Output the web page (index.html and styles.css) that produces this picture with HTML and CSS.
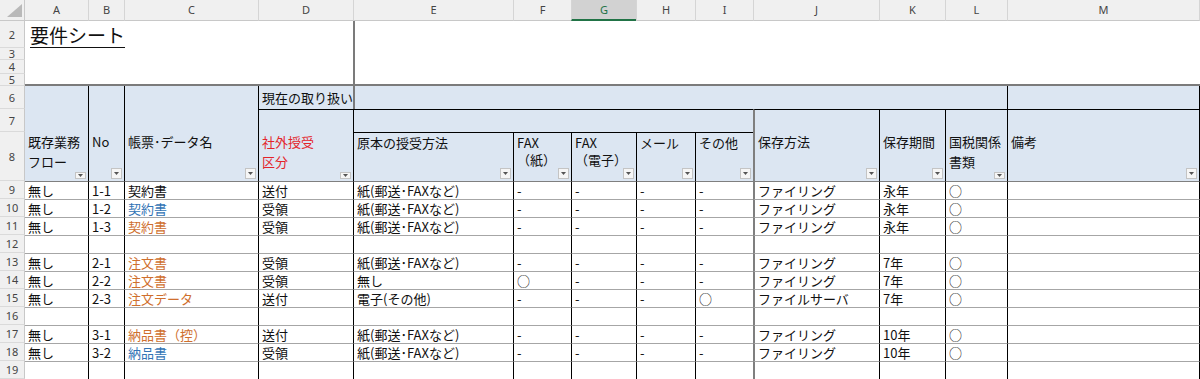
FILE: index.html
```html
<!DOCTYPE html>
<html lang="ja">
<head>
<meta charset="utf-8">
<title>要件シート</title>
<link rel="stylesheet" href="styles.css">
</head>
<body>
<div class="sheet">
  <div class="row">
    <div class="corner"><svg width="15" height="13" viewBox="0 0 15 13"><polygon points="15,0 15,13 0,13" fill="#b9b9b9"/></svg></div>
    <div class="ch first">A</div><div class="ch">B</div><div class="ch">C</div><div class="ch">D</div><div class="ch">E</div><div class="ch">F</div><div class="ch sel">G</div><div class="ch">H</div><div class="ch">I</div><div class="ch">J</div><div class="ch">K</div><div class="ch">L</div><div class="ch m">M</div>
  </div>

  <div class="title"><span>要件シート</span></div>
  <div class="blank"></div>
  <div class="fz-top"></div>
  <div class="rh">2</div>
  <div class="rh">3</div>
  <div class="rh">4</div>
  <div class="rh">5</div>

  <div class="row">
    <div class="rh">6</div>
    <div class="h a"></div>
    <div class="h bl"></div>
    <div class="h bl"></div>
    <div class="h bl mid">現在の取り扱い</div>
    <div class="h fz span8"></div>
    <div class="h bl m"></div>
  </div>

  <div class="row">
    <div class="rh">7</div>
    <div class="h a"></div>
    <div class="h bl"></div>
    <div class="h bl"></div>
    <div class="h bl bt"></div>
    <div class="h bl bt span5"></div>
    <div class="h jl bt"></div>
    <div class="h bl bt"></div>
    <div class="h bl bt"></div>
    <div class="h bl bt m"></div>
  </div>

  <div class="row">
    <div class="rh">8</div>
    <div class="h a"><div class="txt">既存業務<br>フロー</div><div class="flt"><svg width="5" height="3" viewBox="0 0 5 3"><polygon points="0,0 5,0 2.5,3" fill="#555"/></svg></div></div>
    <div class="h bl"><div class="txt">No</div><div class="flt"><svg width="5" height="3" viewBox="0 0 5 3"><polygon points="0,0 5,0 2.5,3" fill="#555"/></svg></div></div>
    <div class="h bl"><div class="txt">帳票･データ名</div><div class="flt"><svg width="5" height="3" viewBox="0 0 5 3"><polygon points="0,0 5,0 2.5,3" fill="#555"/></svg></div></div>
    <div class="h bl"><div class="txt red">社外授受<br>区分</div><div class="flt"><svg width="5" height="3" viewBox="0 0 5 3"><polygon points="0,0 5,0 2.5,3" fill="#555"/></svg></div></div>
    <div class="h bl bt"><div class="txt">原本の授受方法</div><div class="flt"><svg width="5" height="3" viewBox="0 0 5 3"><polygon points="0,0 5,0 2.5,3" fill="#555"/></svg></div></div>
    <div class="h bl bt"><div class="txt fax">FAX<br>（紙）</div><div class="flt"><svg width="5" height="3" viewBox="0 0 5 3"><polygon points="0,0 5,0 2.5,3" fill="#555"/></svg></div></div>
    <div class="h bl bt"><div class="txt fax">FAX<br>（電子）</div><div class="flt"><svg width="5" height="3" viewBox="0 0 5 3"><polygon points="0,0 5,0 2.5,3" fill="#555"/></svg></div></div>
    <div class="h bl bt"><div class="txt">メール</div><div class="flt"><svg width="5" height="3" viewBox="0 0 5 3"><polygon points="0,0 5,0 2.5,3" fill="#555"/></svg></div></div>
    <div class="h bl bt"><div class="txt">その他</div><div class="flt"><svg width="5" height="3" viewBox="0 0 5 3"><polygon points="0,0 5,0 2.5,3" fill="#555"/></svg></div></div>
    <div class="h jl"><div class="txt">保存方法</div><div class="flt"><svg width="5" height="3" viewBox="0 0 5 3"><polygon points="0,0 5,0 2.5,3" fill="#555"/></svg></div></div>
    <div class="h bl"><div class="txt">保存期間</div><div class="flt"><svg width="5" height="3" viewBox="0 0 5 3"><polygon points="0,0 5,0 2.5,3" fill="#555"/></svg></div></div>
    <div class="h bl"><div class="txt">国税関係<br>書類</div><div class="flt"><svg width="5" height="3" viewBox="0 0 5 3"><polygon points="0,0 5,0 2.5,3" fill="#555"/></svg></div></div>
    <div class="h bl m"><div class="txt">備考</div><div class="flt"><svg width="5" height="3" viewBox="0 0 5 3"><polygon points="0,0 5,0 2.5,3" fill="#555"/></svg></div></div>
  </div>

  <div class="row r9">
    <div class="rh">9</div>
    <div class="c a">無し</div><div class="c">1-1</div><div class="c">契約書</div><div class="c">送付</div><div class="c">紙(郵送･FAXなど)</div><div class="c">-</div><div class="c">-</div><div class="c">-</div><div class="c">-</div><div class="c j">ファイリング</div><div class="c">永年</div><div class="c">○</div><div class="c m"></div>
  </div>
  <div class="row">
    <div class="rh">10</div>
    <div class="c a">無し</div><div class="c">1-2</div><div class="c blue">契約書</div><div class="c">受領</div><div class="c">紙(郵送･FAXなど)</div><div class="c">-</div><div class="c">-</div><div class="c">-</div><div class="c">-</div><div class="c j">ファイリング</div><div class="c">永年</div><div class="c">○</div><div class="c m"></div>
  </div>
  <div class="row">
    <div class="rh">11</div>
    <div class="c a">無し</div><div class="c">1-3</div><div class="c orange">契約書</div><div class="c">受領</div><div class="c">紙(郵送･FAXなど)</div><div class="c">-</div><div class="c">-</div><div class="c">-</div><div class="c">-</div><div class="c j">ファイリング</div><div class="c">永年</div><div class="c">○</div><div class="c m"></div>
  </div>
  <div class="row">
    <div class="rh">12</div>
    <div class="c a"></div><div class="c"></div><div class="c"></div><div class="c"></div><div class="c"></div><div class="c"></div><div class="c"></div><div class="c"></div><div class="c"></div><div class="c j"></div><div class="c"></div><div class="c"></div><div class="c m"></div>
  </div>
  <div class="row">
    <div class="rh">13</div>
    <div class="c a">無し</div><div class="c">2-1</div><div class="c orange">注文書</div><div class="c">受領</div><div class="c">紙(郵送･FAXなど)</div><div class="c">-</div><div class="c">-</div><div class="c">-</div><div class="c">-</div><div class="c j">ファイリング</div><div class="c">7年</div><div class="c">○</div><div class="c m"></div>
  </div>
  <div class="row">
    <div class="rh">14</div>
    <div class="c a">無し</div><div class="c">2-2</div><div class="c orange">注文書</div><div class="c">受領</div><div class="c">無し</div><div class="c">○</div><div class="c">-</div><div class="c">-</div><div class="c">-</div><div class="c j">ファイリング</div><div class="c">7年</div><div class="c">○</div><div class="c m"></div>
  </div>
  <div class="row">
    <div class="rh">15</div>
    <div class="c a">無し</div><div class="c">2-3</div><div class="c orange">注文データ</div><div class="c">送付</div><div class="c">電子(その他)</div><div class="c">-</div><div class="c">-</div><div class="c">-</div><div class="c">○</div><div class="c j">ファイルサーバ</div><div class="c">7年</div><div class="c">○</div><div class="c m"></div>
  </div>
  <div class="row">
    <div class="rh">16</div>
    <div class="c a"></div><div class="c"></div><div class="c"></div><div class="c"></div><div class="c"></div><div class="c"></div><div class="c"></div><div class="c"></div><div class="c"></div><div class="c j"></div><div class="c"></div><div class="c"></div><div class="c m"></div>
  </div>
  <div class="row">
    <div class="rh">17</div>
    <div class="c a">無し</div><div class="c">3-1</div><div class="c orange">納品書（控）</div><div class="c">送付</div><div class="c">紙(郵送･FAXなど)</div><div class="c">-</div><div class="c">-</div><div class="c">-</div><div class="c">-</div><div class="c j">ファイリング</div><div class="c">10年</div><div class="c">○</div><div class="c m"></div>
  </div>
  <div class="row">
    <div class="rh">18</div>
    <div class="c a">無し</div><div class="c">3-2</div><div class="c blue">納品書</div><div class="c">受領</div><div class="c">紙(郵送･FAXなど)</div><div class="c">-</div><div class="c">-</div><div class="c">-</div><div class="c">-</div><div class="c j">ファイリング</div><div class="c">10年</div><div class="c">○</div><div class="c m"></div>
  </div>
  <div class="row">
    <div class="rh">19</div>
    <div class="c a"></div><div class="c"></div><div class="c"></div><div class="c"></div><div class="c"></div><div class="c"></div><div class="c"></div><div class="c"></div><div class="c"></div><div class="c j"></div><div class="c"></div><div class="c"></div><div class="c m"></div>
  </div>
</div>
</body>
</html>
```

FILE: styles.css
```css
* { box-sizing: border-box; }
html, body { margin: 0; padding: 0; background: #fff; }
body {
  width: 1200px;
  height: 379px;
  overflow: hidden;
  font-family: "Noto Sans CJK JP", sans-serif;
  color: #111;
}
.sheet {
  display: grid;
  grid-template-columns: 25px 63px 36px 134px 95px 160px 58px 65px 59px 58px 126px 66px 62px 193px;
  grid-template-rows: 21px 27px 12px 14px 12px 23px 23px 49px repeat(11, 18px);
  width: 1200px;
}
.row { display: contents; }

/* column headers */
.corner {
  background: #f0f0f0;
  border-right: 1px solid #c8c8c8;
  border-bottom: 1px solid #c8c8c8;
  display: flex;
  align-items: flex-end;
  justify-content: flex-end;
  padding: 0 2px 3px 0;
}
.corner svg { display: block; }
.ch {
  background: #f0f0f0;
  border-left: 1px solid #d5d5d5;
  border-bottom: 1px solid #c8c8c8;
  font: 11px/20px "Noto Sans", sans-serif;
  color: #444;
  text-align: center;
}
.ch.first { border-left: none; }
.ch.sel {
  background: #d2d2d2;
  color: #217346;
  border-bottom: 2px solid #217346;
  line-height: 19px;
}
.ch.m { border-right: 1px solid #d5d5d5; }

/* row headers */
.rh {
  background: #f0f0f0;
  border-right: 1px solid #c8c8c8;
  border-bottom: 1px solid #dadada;
  font: 11px "Noto Sans", sans-serif;
  color: #444;
  display: flex;
  align-items: center;
  justify-content: center;
  white-space: nowrap;
}

/* top frozen area */
.title {
  grid-area: 2 / 2 / 3 / 6;
  font-size: 19px;
  line-height: 27px;
  padding-left: 5px;
  white-space: nowrap;
  color: #111;
}
.title span {
  text-decoration: underline;
  text-decoration-thickness: 1px;
  text-underline-offset: 4px;
}
.blank {
  grid-area: 3 / 2 / 6 / 6;
  border-bottom: 2px solid #7b7b7b;
}
.fz-top {
  grid-area: 2 / 6 / 6 / 15;
  border-left: 2px solid #7b7b7b;
  border-bottom: 2px solid #7b7b7b;
}

/* header block (rows 6-8) */
.h {
  background: #dce6f2;
  font-size: 13px;
  line-height: 20px;
  padding: 0 3px;
  display: flex;
  flex-direction: column;
  white-space: nowrap;
  overflow: visible;
}
.h.bl { border-left: 1px solid #000; }
.h.bt { border-top: 1px solid #000; }
.h.jl { border-left: 2px solid #7f7f7f; }
.h.fz { border-left: 2px solid #7b7b7b; }
.h.mid { line-height: 23px; padding-top: 0; }
.h.m { border-right: 1px solid #000; }
.span8 { grid-column: span 8; }
.span5 { grid-column: span 5; }
.txt.fax { line-height: 17px; padding-top: 1px; }
.red { color: #e3242b; }
.flt {
  margin-top: auto;
  align-self: flex-end;
  margin-right: -1px;
  margin-bottom: 2px;
  width: 11px;
  height: 11px;
  border: 1px solid #c4c4c4;
  background: #f6f6f6;
  display: flex;
  align-items: center;
  justify-content: center;
}
.flt svg { display: block; }

/* data cells */
.c {
  border-left: 1px solid #000;
  border-top: 1px solid #a6a6a6;
  padding: 1px 3px 0;
  font-size: 13px;
  line-height: 16px;
  white-space: nowrap;
  overflow: hidden;
}
.c.a, .h.a { border-left: none; }
.c.j { border-left: 2px solid #7f7f7f; }
.c.m { border-right: 1px solid #000; }
.r9 .c { border-top-color: #7f7f7f; }
.blue { color: #3274b5; }
.orange { color: #cf6f2e; }
```
